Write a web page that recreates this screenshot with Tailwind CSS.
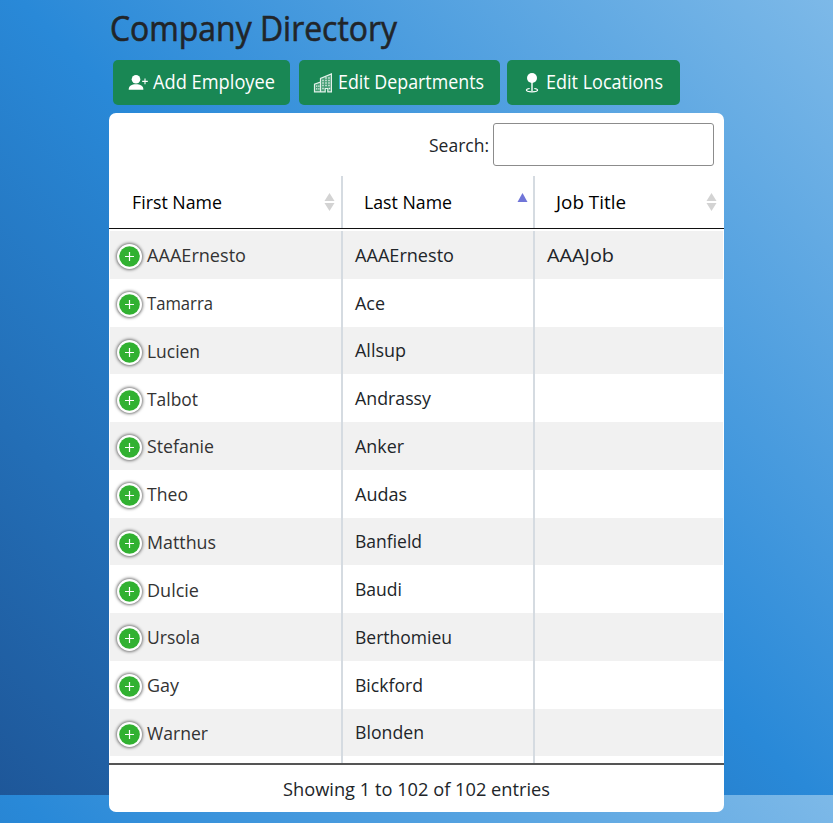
<!DOCTYPE html>
<html lang="en">
<head>
<meta charset="utf-8">
<title>Company Directory</title>
<script src="https://cdn.jsdelivr.net/npm/@tailwindcss/browser@4"></script>
</head>
<body class="h-[823px] overflow-hidden bg-[linear-gradient(45deg,#1e5799_0%,#2989d8_50%,#7db9e8_100%)] bg-[length:833px_795px] font-['Open_Sans','Noto_Sans',sans-serif] text-[#212529]">
<main class="ml-[109px] w-[615px]">
  <h1 class="h-[60px] pt-[9px] pl-px text-[34px] leading-[40px] whitespace-nowrap"><svg class="overflow-visible" width="288" height="40"><text x="0" y="32" textLength="287" lengthAdjust="spacingAndGlyphs" fill="currentColor" stroke="currentColor" stroke-width="0.600">Company Directory</text></svg></h1>
  <div class="flex gap-2 pl-1 text-[19.500px] text-white">
    <button class="flex h-[45px] w-[177px] items-center rounded-[5px] bg-[#198754] pl-[15px]">
      <svg class="mr-[4px] shrink-0" width="21" height="20" viewBox="0 0 21 20" fill="#fff"><circle cx="8" cy="6.200" r="4.300"/><path d="M.7 16.700c0-4 3-5.400 7.300-5.400s7.400 1.400 7.400 5.400z"/><path d="M14.200 8.400h5.600M17 5.600v5.600" stroke="#fff" stroke-width="1.100"/></svg>
      <svg class="overflow-visible" width="123" height="28"><text x="0" y="20" textLength="122" lengthAdjust="spacingAndGlyphs" fill="currentColor">Add Employee</text></svg>
    </button>
    <button class="ml-px flex h-[45px] w-[201px] items-center rounded-[5px] bg-[#198754] pl-[14px]">
      <svg class="mr-[5px] shrink-0" width="20" height="20" viewBox="0 0 20 20" fill="none" stroke="#e4f1ea" stroke-width="1.200"><path fill="#fff" fill-opacity=".2" d="M1.500 18.800v-7.600l6-2.200V5.400L18.400.9v17.900h-3.600v-3.300h-2.600v3.300zM7.500 9v9.800"/><path stroke-width="1.300" d="M3 13.200h1.300M5.200 13.200h1.300M3 15.800h1.300M5.200 15.800h1.300M9.300 7.500h1.400M12.300 7.500h1.400M15.300 7.500h1.400M9.300 10h1.400M12.300 10h1.400M15.300 10h1.400M9.300 12.500h1.400M12.300 12.500h1.400M15.300 12.500h1.400M12.300 5h1.400M15.300 5h1.400M9.300 15.500h1.400M15.800 15.500h1.400"/></svg>
      <svg class="overflow-visible" width="147" height="28"><text x="0" y="20" textLength="146" lengthAdjust="spacingAndGlyphs" fill="currentColor">Edit Departments</text></svg>
    </button>
    <button class="-ml-px flex h-[45px] w-[173px] items-center rounded-[5px] bg-[#198754] pl-[15px]">
      <svg class="mr-[4px] shrink-0" width="20" height="20" viewBox="0 0 20 20" fill="none" stroke="#fff"><circle cx="10" cy="5" r="5" fill="#fff" stroke="none"/><path d="M10 9v9" stroke-width="1.400"/><path d="M7.700 15.500c-2 .3-3.300.8-3.300 1.600 0 1 2.400 1.800 5.600 1.800s5.600-.8 5.600-1.800c0-.8-1.300-1.300-3.300-1.600" stroke-width="1.200"/></svg>
      <svg class="overflow-visible" width="118" height="28"><text x="0" y="20" textLength="117" lengthAdjust="spacingAndGlyphs" fill="currentColor">Edit Locations</text></svg>
    </button>
  </div>
  <section class="mt-[8px] h-[699px] rounded-[7px] bg-white text-[19px]">
    <label class="flex h-[63px] items-start justify-end pt-[10px] pr-[10px]">
      <svg class="mt-[9px] mr-[3px] overflow-visible" width="61" height="28"><text x="0" y="20" textLength="60" lengthAdjust="spacingAndGlyphs" fill="currentColor">Search:</text></svg>
      <input class="h-[43px] w-[221px] rounded-[3px] border border-[#8c8c8c] bg-white">
    </label>
    <div id="head" class="grid h-[53px] grid-cols-[234px_192px_189px] border-b border-[#111] text-black"></div>
    <div id="rows" class="mr-px ml-px h-[534px] overflow-hidden pt-[2px]"></div>
    <footer class="flex justify-center border-t-2 border-[#555] pt-[11px]"><svg class="overflow-visible" width="267" height="28"><text x="0" y="20" textLength="267" lengthAdjust="spacingAndGlyphs" fill="currentColor">Showing 1 to 102 of 102 entries</text></svg></footer>
  </section>
</main>
<script>
const label = (text, width) => `<svg class="overflow-visible shrink-0" width="${width}" height="28"><text x="0" y="21" textLength="${width}" lengthAdjust="spacingAndGlyphs" fill="currentColor">${text}</text></svg>`;
const heads = [['First Name', 90, 'pl-[23px] pr-[6px]'], ['Last Name', 88, 'pl-[21px] pr-[5px]'], ['Job Title', 70, 'pl-[21px] pr-[7px]']];
const edge = 'border-r-2 border-[#d5dbe1]';
document.querySelector('#head').innerHTML = heads.map(([text, width, pad], i) =>
  `<div class="flex items-center justify-between ${pad} ${i < 2 ? edge : ''}">${label(text, width)}<svg width="11" height="18" viewBox="0 0 11 18">${i === 1
    ? '<path d="M5.500 0 10.500 9H.5z" fill="#7075d8"/>'
    : '<path d="M5.500 0 10.500 8H.5zM.5 10h10l-5 8z" fill="#d3d3d3"/>'}</svg></div>`).join('');
const people = [
  ['AAAErnesto', 99, 'AAAErnesto', 99, 'AAAJob', 67], ['Tamarra', 66, 'Ace', 30],
  ['Lucien', 53, 'Allsup', 51], ['Talbot', 51, 'Andrassy', 76],
  ['Stefanie', 67, 'Anker', 49], ['Theo', 41, 'Audas', 52],
  ['Matthus', 69, 'Banfield', 67], ['Dulcie', 52, 'Baudi', 47],
  ['Ursola', 53, 'Berthomieu', 97], ['Gay', 32, 'Bickford', 68],
  ['Warner', 61, 'Blonden', 69]
];
const plus = '<svg class="mr-[3px] shrink-0 rounded-full bg-white shadow-[0_0_3px_1px_#777]" width="25" height="25" viewBox="0 0 25 25"><circle cx="12.500" cy="12.500" r="10.300" fill="#31b131"/><path d="M8 12.500h9M12.500 8v9" stroke="#fff" stroke-width="1.200"/></svg>';
document.querySelector('#rows').innerHTML = people.map((p, i) =>
  `<div class="grid h-[47.750px] grid-cols-[233px_192px_188px] ${i % 2 ? 'bg-white' : 'bg-[#f1f1f1]'}">
    <div class="flex items-center pl-[6.500px] pt-[4px] ${edge}">${plus}<span class="mb-[3px] ml-[2px] text-[#333]">${label(p[0], p[1])}</span></div>
    <div class="flex items-center pl-[12px] ${edge}">${label(p[2], p[3])}</div>
    <div class="flex items-center pl-[12px]">${p[4] ? label(p[4], p[5]) : ''}</div>
  </div>`).join('') + `<div class="grid h-[8px] grid-cols-[233px_192px_188px]"><div class="${edge}"></div><div class="${edge}"></div><div></div></div>`;
</script>
</body>
</html>
